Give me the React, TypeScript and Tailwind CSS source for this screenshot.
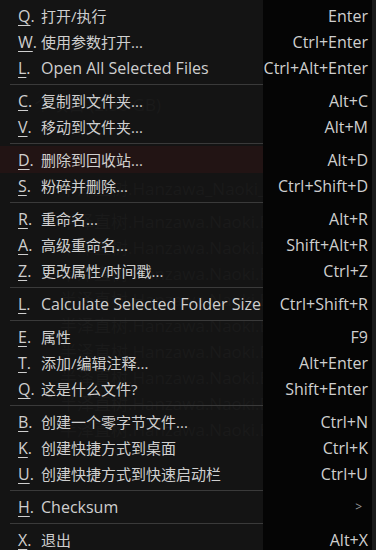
type Row = { key: string; label: string; shortcut?: string } | "sep";

const rows: Row[] = [
  { key: "Q", label: "打开/执行", shortcut: "Enter" },
  { key: "W", label: "使用参数打开...", shortcut: "Ctrl+Enter" },
  { key: "L", label: "Open All Selected Files", shortcut: "Ctrl+Alt+Enter" },
  "sep",
  { key: "C", label: "复制到文件夹...", shortcut: "Alt+C" },
  { key: "V", label: "移动到文件夹...", shortcut: "Alt+M" },
  "sep",
  { key: "D", label: "删除到回收站...", shortcut: "Alt+D" },
  { key: "S", label: "粉碎并删除...", shortcut: "Ctrl+Shift+D" },
  "sep",
  { key: "R", label: "重命名...", shortcut: "Alt+R" },
  { key: "A", label: "高级重命名...", shortcut: "Shift+Alt+R" },
  { key: "Z", label: "更改属性/时间戳...", shortcut: "Ctrl+Z" },
  "sep",
  { key: "L", label: "Calculate Selected Folder Size", shortcut: "Ctrl+Shift+R" },
  "sep",
  { key: "E", label: "属性", shortcut: "F9" },
  { key: "T", label: "添加/编辑注释...", shortcut: "Alt+Enter" },
  { key: "Q", label: "这是什么文件?", shortcut: "Shift+Enter" },
  "sep",
  { key: "B", label: "创建一个零字节文件...", shortcut: "Ctrl+N" },
  { key: "K", label: "创建快捷方式到桌面", shortcut: "Ctrl+K" },
  { key: "U", label: "创建快捷方式到快速启动栏", shortcut: "Ctrl+U" },
  "sep",
  { key: "H", label: "Checksum", shortcut: ">" },
  "sep",
  { key: "X", label: "退出", shortcut: "Alt+X" },
];

// faint file list showing through the translucent menu
const ghost: { top: number; left: number; text: string }[] = [
  { top: 92, left: 20, text: "1 个项目  (2.50 GB)" },
  { top: 176, left: 60, text: "半泽直树.Hanzawa_Naoki_EP_02.Chi_Jap" },
  { top: 209, left: 60, text: "半泽直树.Hanzawa.Naoki.Ep01.Chi_Jap.HDTV" },
  { top: 235, left: 60, text: "半泽直树.Hanzawa.Naoki.Ep03.Chi_Jap.HDTV" },
  { top: 261, left: 60, text: "半泽直树.Hanzawa.Naoki.Ep04.Chi_Jap.HDTV" },
  { top: 287, left: 60, text: "半泽直树.Hanzawa.Naoki.Ep05.Chi_Jap.HDTV" },
  { top: 313, left: 60, text: "半泽直树.Hanzawa.Naoki.Ep06.Chi_Jap.HDTV" },
  { top: 339, left: 60, text: "半泽直树.Hanzawa.Naoki.Ep07.Chi_Jap.HDTV" },
  { top: 365, left: 60, text: "半泽直树.Hanzawa.Naoki.Ep08.Chi_Jap.HDTV" },
  { top: 391, left: 60, text: "半泽直树.Hanzawa.Naoki.Ep09.Chi_Jap.HDTV" },
  { top: 417, left: 60, text: "半泽直树.Hanzawa.Naoki.Ep10.Final.Chi_Jap" },
];

const latin = (s: string) => /^[\x00-\x7f]+$/.test(s);

export default function App() {
  return (
    <div
      className="relative h-[550px] w-[376px] overflow-hidden bg-[linear-gradient(to_right,transparent_263px,#050505_263px,#050505_372px,#1b1b1b_372px),linear-gradient(to_bottom,#141414_146px,#221414_146px,#221414_173px,#141414_173px)] text-[15px] text-[#cfcfcf]"
      style={{ fontFamily: '"Open Sans", "Noto Sans CJK SC", sans-serif' }}
    >
      <div aria-hidden className="pointer-events-none absolute inset-y-0 left-0 w-[263px] select-none overflow-hidden text-[#1a1a1a]">
        {ghost.map((g, i) => (
          <div key={i} className="absolute whitespace-nowrap text-[17px]" style={{ top: g.top, left: g.left }}>
            {g.text}
          </div>
        ))}
      </div>

      <ul className="relative flex flex-col pt-[3px]">
        {rows.map((r, i) =>
          r === "sep" ? (
            <li key={i} className="flex h-[7px] items-center pl-[10px]">
              <div className="h-px w-[253px] bg-[#3a3a3a]" />
            </li>
          ) : (
            <li key={i} className="flex h-[26px] shrink-0 items-center pr-[8px] leading-none">
              <span className="w-[41px] shrink-0 pl-[18px] text-[16px]">
                <span className="underline decoration-1 underline-offset-[3px]">{r.key}</span>.
              </span>
              <span className={`flex-1 whitespace-nowrap ${latin(r.label) ? "text-[16px]" : ""}`}>{r.label}</span>
              {r.shortcut === ">" ? (
                <span className="pr-[6px] text-[12px] text-[#9a9a9a]">&gt;</span>
              ) : (
                <span className="whitespace-nowrap pl-3 text-right text-[16px]">{r.shortcut}</span>
              )}
            </li>
          )
        )}
      </ul>
    </div>
  );
}
